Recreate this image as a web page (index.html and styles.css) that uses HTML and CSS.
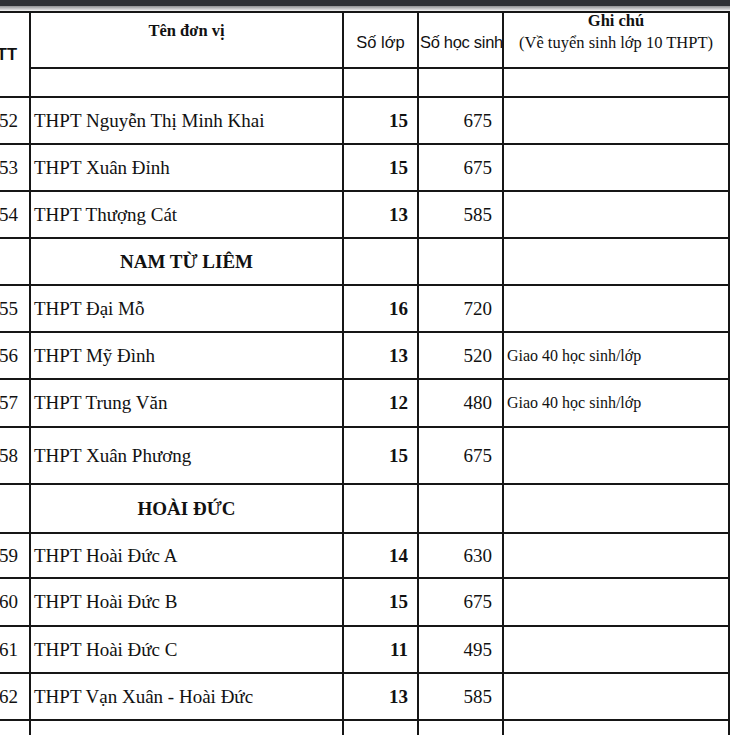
FILE: index.html
```html
<!DOCTYPE html>
<html lang="vi">
<head>
<meta charset="utf-8">
<title>Chỉ tiêu tuyển sinh</title>
<link rel="stylesheet" href="styles.css">
</head>
<body>
<div class="topbar"></div>
<div class="shade"></div>
<table class="sheet">
  <colgroup>
    <col class="c-stt">
    <col class="c-name">
    <col class="c-lop">
    <col class="c-hs">
    <col class="c-note">
  </colgroup>
  <tr class="h1">
    <th class="stt-h" rowspan="2">STT</th>
    <th class="name-h">Tên đơn vị</th>
    <th class="sans-h lop-h">Số lớp</th>
    <th class="sans-h hs-h">Số học sinh</th>
    <th class="note-h"><span class="note-title">Ghi chú</span><span class="note-sub">(Về tuyển sinh lớp 10 THPT)</span></th>
  </tr>
  <tr class="h2"><td></td><td></td><td></td><td></td></tr>

  <tr class="r47"><td class="stt">52</td><td class="name">THPT Nguyễn Thị Minh Khai</td><td class="lop">15</td><td class="hs">675</td><td class="note"></td></tr>
  <tr class="r47"><td class="stt">53</td><td class="name">THPT Xuân Đỉnh</td><td class="lop">15</td><td class="hs">675</td><td class="note"></td></tr>
  <tr class="r47"><td class="stt">54</td><td class="name">THPT Thượng Cát</td><td class="lop">13</td><td class="hs">585</td><td class="note"></td></tr>
  <tr class="r47"><td class="stt"></td><td class="group">NAM TỪ LIÊM</td><td></td><td></td><td></td></tr>
  <tr class="r47"><td class="stt">55</td><td class="name">THPT Đại Mỗ</td><td class="lop">16</td><td class="hs">720</td><td class="note"></td></tr>
  <tr class="r47"><td class="stt">56</td><td class="name">THPT Mỹ Đình</td><td class="lop">13</td><td class="hs">520</td><td class="note">Giao 40 học sinh/lớp</td></tr>
  <tr class="r48"><td class="stt">57</td><td class="name">THPT Trung Văn</td><td class="lop">12</td><td class="hs">480</td><td class="note">Giao 40 học sinh/lớp</td></tr>
  <tr class="r57"><td class="stt">58</td><td class="name">THPT Xuân Phương</td><td class="lop">15</td><td class="hs">675</td><td class="note"></td></tr>
  <tr class="r49"><td class="stt"></td><td class="group">HOÀI ĐỨC</td><td></td><td></td><td></td></tr>
  <tr class="r45"><td class="stt">59</td><td class="name">THPT Hoài Đức A</td><td class="lop">14</td><td class="hs">630</td><td class="note"></td></tr>
  <tr class="r48"><td class="stt">60</td><td class="name">THPT Hoài Đức B</td><td class="lop">15</td><td class="hs">675</td><td class="note"></td></tr>
  <tr class="r47"><td class="stt">61</td><td class="name">THPT Hoài Đức C</td><td class="lop">11</td><td class="hs">495</td><td class="note"></td></tr>
  <tr class="r47"><td class="stt">62</td><td class="name">THPT Vạn Xuân - Hoài Đức</td><td class="lop">13</td><td class="hs">585</td><td class="note"></td></tr>
  <tr class="r47"><td class="stt"></td><td class="name"></td><td class="lop"></td><td class="hs"></td><td class="note"></td></tr>
</table>
</body>
</html>
```
FILE: styles.css
```css
html, body {
  margin: 0;
  padding: 0;
  background: #ffffff;
  overflow: hidden;
}

body {
  width: 730px;
  height: 735px;
  font-family: "Liberation Serif", "Times New Roman", serif;
  color: #111111;
}

.topbar {
  height: 6px;
  background: #2e3135;
}

.shade {
  height: 5px;
  background: linear-gradient(#8e9092, #f4f4f4);
}

.sheet {
  border-collapse: collapse;
  table-layout: fixed;
  width: 759px;
  margin-left: -31px;
}

.c-stt { width: 60px; }
.c-name { width: 313px; }
.c-lop { width: 75px; }
.c-hs { width: 85px; }
.c-note { width: 226px; }

.sheet th,
.sheet td {
  border: 2px solid #161616;
  padding: 0;
  font-size: 19px;
  font-weight: normal;
  vertical-align: middle;
  white-space: nowrap;
  overflow: hidden;
}

.h1 { height: 56px; }
.h2 { height: 29px; }
.r45 { height: 45px; }
.r47 { height: 47px; }
.r48 { height: 48px; }
.r49 { height: 49px; }
.r57 { height: 57px; }

.sheet .stt-h {
  font-family: "Liberation Sans", Arial, sans-serif;
  font-weight: bold;
  font-size: 16.5px;
  text-align: right;
  padding-right: 12px;
}

.sheet .name-h {
  font-weight: bold;
  font-size: 16.5px;
  line-height: 19px;
  vertical-align: top;
  padding-top: 8px;
  text-align: center;
}

.sheet .sans-h {
  font-family: "Liberation Sans", Arial, sans-serif;
  font-size: 16.5px;
  padding-top: 4px;
}

.sheet .lop-h {
  text-align: center;
}

.sheet .hs-h {
  text-align: left;
  padding-left: 1px;
  letter-spacing: -0.3px;
  overflow: visible;
}

.sheet .note-h {
  font-size: 16.5px;
  vertical-align: top;
  text-align: center;
}

.note-title {
  display: block;
  font-weight: bold;
  line-height: 15px;
}

.note-sub {
  display: block;
  font-weight: normal;
  line-height: 29px;
}

.sheet .stt {
  text-align: right;
  padding-right: 11px;
}

.sheet .name {
  text-align: left;
  padding-left: 3px;
}

.sheet .group {
  font-weight: bold;
  text-align: center;
}

.sheet .lop {
  font-weight: bold;
  text-align: right;
  padding-right: 9px;
}

.sheet .hs {
  text-align: right;
  padding-right: 10px;
}

.sheet .note {
  font-size: 16px;
  text-align: left;
  padding-left: 3px;
}
```
